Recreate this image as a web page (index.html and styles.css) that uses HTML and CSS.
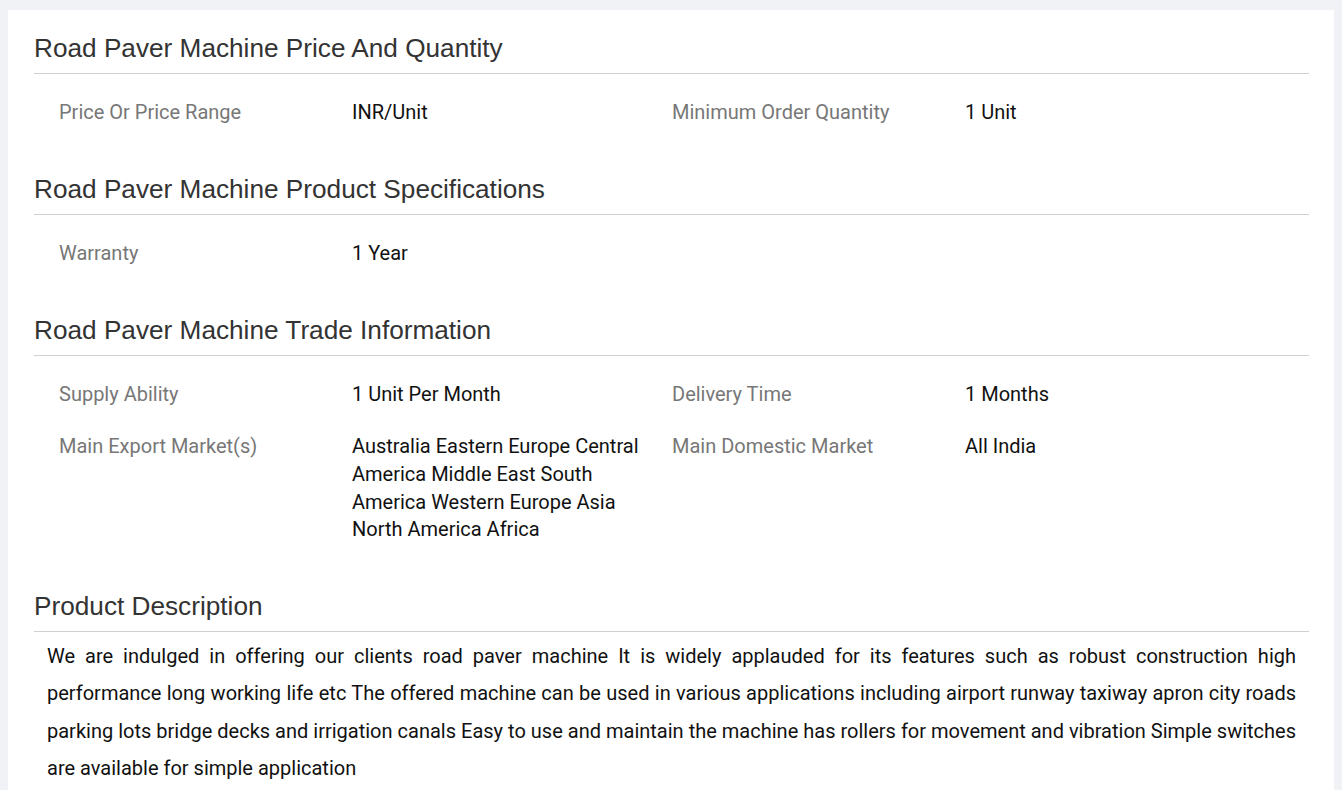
FILE: index.html
```html
<!DOCTYPE html>
<html lang="en">
<head>
    <meta charset="UTF-8">
    <meta name="viewport" content="width=device-width, initial-scale=1.0">
    <title>Road Paver Machine</title>
    <link rel="stylesheet" href="styles.css">
</head>
<body>
    <div class="card">
        <section class="block">
            <h2 class="block-title">Road Paver Machine Price And Quantity</h2>
            <div class="spec-grid">
                <div class="spec-label">Price Or Price Range</div>
                <div class="spec-value">INR/Unit</div>
                <div class="spec-label">Minimum Order Quantity</div>
                <div class="spec-value">1 Unit</div>
            </div>
        </section>

        <section class="block">
            <h2 class="block-title">Road Paver Machine Product Specifications</h2>
            <div class="spec-grid">
                <div class="spec-label">Warranty</div>
                <div class="spec-value">1 Year</div>
            </div>
        </section>

        <section class="block">
            <h2 class="block-title">Road Paver Machine Trade Information</h2>
            <div class="spec-grid">
                <div class="spec-label">Supply Ability</div>
                <div class="spec-value">1 Unit Per Month</div>
                <div class="spec-label">Delivery Time</div>
                <div class="spec-value">1 Months</div>
                <div class="spec-label">Main Export Market(s)</div>
                <div class="spec-value">Australia Eastern Europe Central America Middle East South America Western Europe Asia North America Africa</div>
                <div class="spec-label">Main Domestic Market</div>
                <div class="spec-value">All India</div>
            </div>
        </section>

        <section class="block">
            <h2 class="block-title">Product Description</h2>
            <p class="description">We are indulged in offering our clients road paver machine It is widely applauded for its features such as robust construction high performance long working life etc The offered machine can be used in various applications including airport runway taxiway apron city roads parking lots bridge decks and irrigation canals Easy to use and maintain the machine has rollers for movement and vibration Simple switches are available for simple application</p>
        </section>
    </div>
</body>
</html>
```

FILE: styles.css
```css
body {
    margin: 0;
    padding: 10px 8px 0;
    background-color: #f0f2f5;
    font-family: Roboto, "Liberation Sans", sans-serif;
}
.card {
    background-color: #fff;
    padding: 23px 25px 20px 26px;
}
.block + .block {
    margin-top: 36.5px;
}
.block-title {
    margin: 0;
    padding-bottom: 10px;
    border-bottom: 1px solid #d0d0d0;
    font-family: "Liberation Sans", Arial, sans-serif;
    font-weight: normal;
    font-size: 26.2px;
    line-height: 30px;
    color: #333;
}
.spec-grid {
    display: grid;
    grid-template-columns: 293px 320px 293px 1fr;
    padding: 12px 25px 0;
}
.spec-label,
.spec-value {
    padding: 13px 0 11px;
    font-size: 20px;
    line-height: 27.7px;
}
.spec-label {
    color: #777;
}
.spec-value {
    color: #111;
    padding-right: 20px;
}
.description {
    margin: 5.5px 13px 0;
    font-size: 20px;
    line-height: 37.4px;
    color: #111;
    text-align: justify;
}
```
